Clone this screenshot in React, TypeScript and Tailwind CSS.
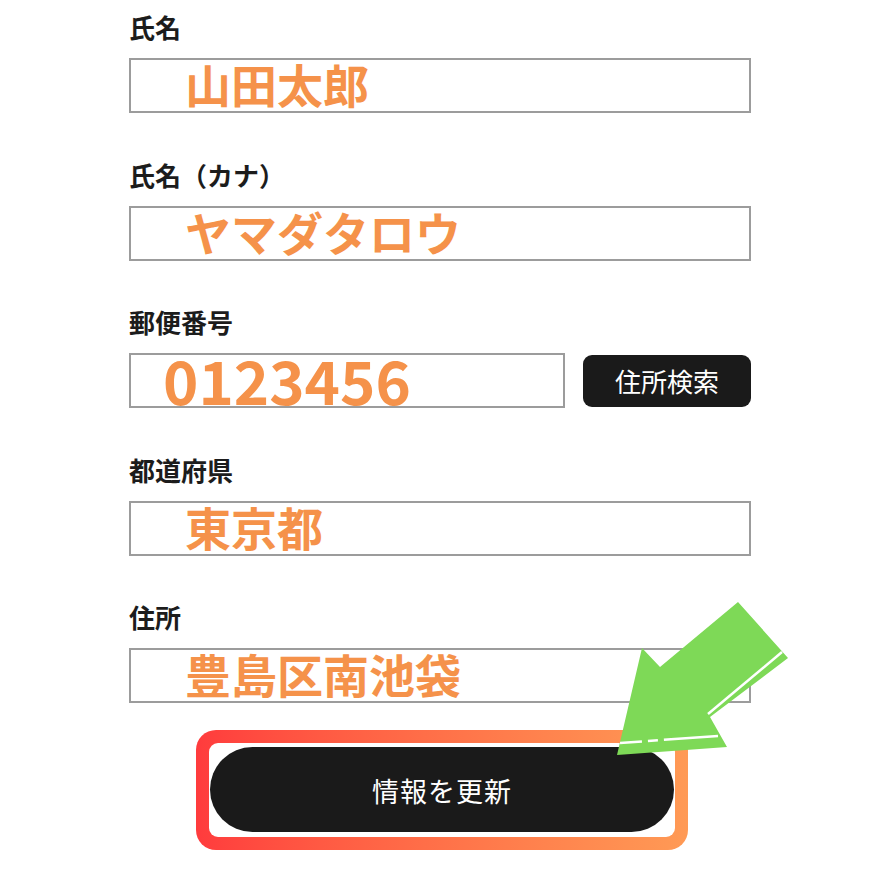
const font = { fontFamily: '"Noto Sans CJK JP", "Noto Sans", sans-serif' };

type Field = { label: string; value: string; pad: string; size: string };

const fields: Field[] = [
  { label: "氏名", value: "山田太郎", pad: "pl-[54px]", size: "text-[46px]" },
  { label: "氏名（カナ）", value: "ヤマダタロウ", pad: "pl-[54px]", size: "text-[46px]" },
  { label: "郵便番号", value: "0123456", pad: "pl-[32px]", size: "text-[60px]" },
  { label: "都道府県", value: "東京都", pad: "pl-[54px]", size: "text-[46px]" },
  { label: "住所", value: "豊島区南池袋", pad: "pl-[54px]", size: "text-[46px]" },
];

function Arrow() {
  return (
    <svg
      className="absolute left-[600px] top-[590px] pointer-events-none"
      width="200"
      height="180"
      viewBox="600 590 200 180"
    >
      <polygon
        points="738,602 788,658 710,717 727,747 617,755 642,648 660,667"
        fill="#7ed957"
      />
      <line x1="782" y1="652" x2="708" y2="714" stroke="#fff" strokeWidth="2.5" />
      <line
        x1="620"
        y1="743"
        x2="718"
        y2="736"
        stroke="#fff"
        strokeWidth="2.5"
        strokeDasharray="22 6 10 6 60"
      />
    </svg>
  );
}

export default function App() {
  return (
    <div className="relative w-[880px] h-[880px] bg-white overflow-hidden" style={font}>
      <div className="flex flex-col gap-[45.5px] pt-[11px] pl-[129px] w-[751px]">
        {fields.map((f) => (
          <div key={f.label} className="flex flex-col gap-[15px]">
            <div className="h-[32px] leading-[32px] text-[26px] font-bold text-[#1c1c1c]">
              {f.label}
            </div>
            {f.label === "郵便番号" ? (
              <div className="flex items-center gap-[18px]">
                <div
                  className={`h-[55px] w-[436px] border-2 border-[#9c9c9c] flex items-center ${f.pad}`}
                >
                  <span className={`${f.size} font-bold text-[#f5924a] leading-none mb-[4px]`}>
                    {f.value}
                  </span>
                </div>
                <button className="h-[52px] w-[168px] rounded-[9px] bg-[#1a1a1a] text-white text-[26px] leading-none">
                  住所検索
                </button>
              </div>
            ) : (
              <div className={`h-[55px] border-2 border-[#9c9c9c] flex items-center ${f.pad}`}>
                <span className={`${f.size} font-bold text-[#f5924a] leading-none mb-[5px]`}>
                  {f.value}
                </span>
              </div>
            )}
          </div>
        ))}
      </div>

      <div className="ml-[196px] mt-[27px] w-[492px] h-[120px] rounded-[20px] p-[13px] bg-gradient-to-r from-[#ff3b3d] to-[#ff9a55]">
        <div className="h-full rounded-[9px] bg-white px-[1px] pt-[4px] pb-[5px]">
          <button className="w-full h-full rounded-full bg-[#1a1a1a] text-white text-[27px] tracking-[1px] pt-[4px]">
            情報を更新
          </button>
        </div>
      </div>

      <Arrow />
    </div>
  );
}
